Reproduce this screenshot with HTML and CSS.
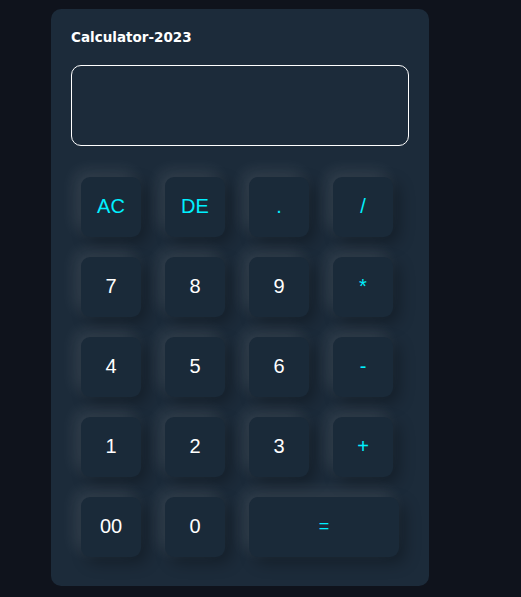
FILE: index.html
```html
<!DOCTYPE html>
<html>
<head>
<meta charset="utf-8">
<link rel="stylesheet" href="styles.css">
</head>
<body>
<div class="card">
  <h1 class="title">Calculator-2023</h1>
  <div class="display"></div>
  <div class="keys">
    <button class="key op">AC</button>
    <button class="key op">DE</button>
    <button class="key op">.</button>
    <button class="key op">/</button>
    <button class="key">7</button>
    <button class="key">8</button>
    <button class="key">9</button>
    <button class="key op">*</button>
    <button class="key">4</button>
    <button class="key">5</button>
    <button class="key">6</button>
    <button class="key op">-</button>
    <button class="key">1</button>
    <button class="key">2</button>
    <button class="key">3</button>
    <button class="key op">+</button>
    <button class="key">00</button>
    <button class="key">0</button>
    <button class="key op wide">=</button>
  </div>
</div>
</body>
</html>
```
FILE: styles.css
```css
html, body {
  margin: 0;
  padding: 0;
  background: #0f131c;
}
body {
  padding: 9px 0 0 51px;
}
.card {
  box-sizing: border-box;
  width: 378px;
  height: 577px;
  background: #1c2b3a;
  border-radius: 10px;
  padding: 20px 20px 0 20px;
}
.title {
  margin: 0;
  font-family: "DejaVu Sans", Verdana, sans-serif;
  font-weight: bold;
  font-size: 13.5px;
  line-height: 17px;
  color: #ffffff;
}
.display {
  box-sizing: border-box;
  margin-top: 19px;
  height: 81px;
  border: 1px solid #ffffff;
  border-radius: 10px;
}
.keys {
  margin-top: 31px;
  padding-left: 10px;
  display: grid;
  grid-template-columns: repeat(4, 60px);
  grid-auto-rows: 60px;
  column-gap: 24px;
  row-gap: 20px;
}
.key {
  border: none;
  border-radius: 9px;
  background: #1a2a39;
  color: #ffffff;
  font-family: "Liberation Sans", Arial, sans-serif;
  font-size: 20px;
  padding: 0 0 2px 0;
  box-shadow: -6px -6px 16px rgba(255, 255, 255, 0.1), 6px 6px 16px rgba(0, 0, 0, 0.3);
}
.op {
  color: #00f0ff;
}
.wide {
  grid-column: span 2;
  width: 150px;
  font-size: 18px;
}
```
